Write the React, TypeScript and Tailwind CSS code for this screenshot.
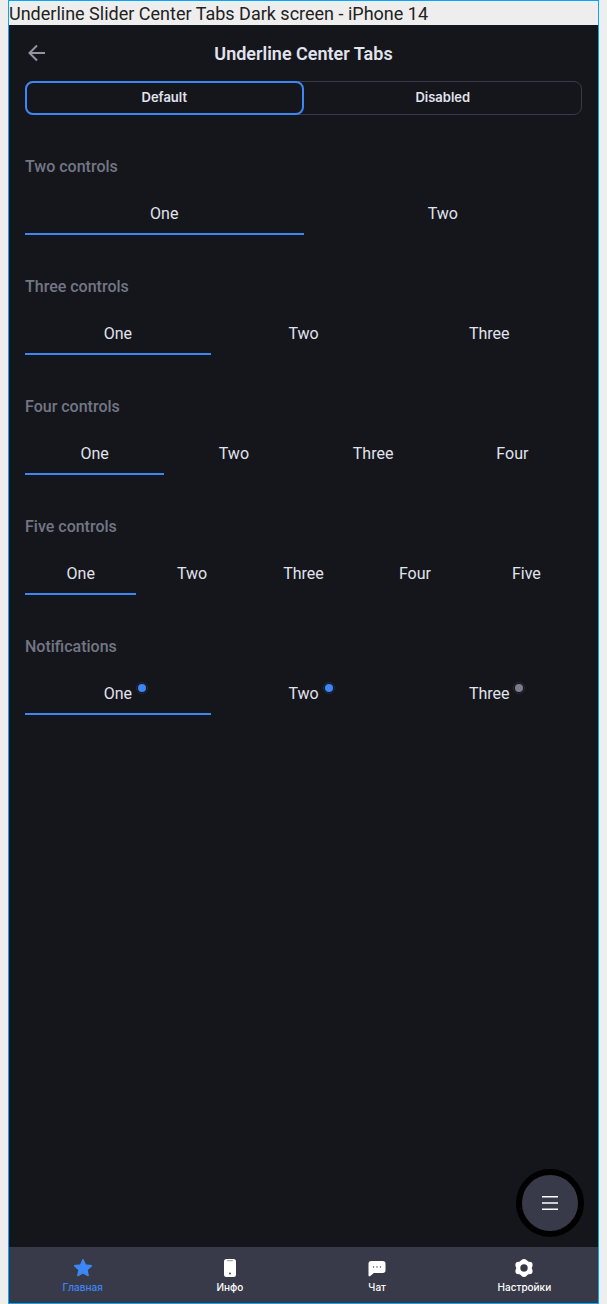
import { useState } from "react";
import type { ReactNode } from "react";

type Badge = "active" | "muted";
type Tab = { label: string; badge?: Badge };
type Section = { title: string; tabs: Tab[] };

const sections: Section[] = [
  { title: "Two controls", tabs: [{ label: "One" }, { label: "Two" }] },
  { title: "Three controls", tabs: [{ label: "One" }, { label: "Two" }, { label: "Three" }] },
  {
    title: "Four controls",
    tabs: [{ label: "One" }, { label: "Two" }, { label: "Three" }, { label: "Four" }],
  },
  {
    title: "Five controls",
    tabs: [{ label: "One" }, { label: "Two" }, { label: "Three" }, { label: "Four" }, { label: "Five" }],
  },
  {
    title: "Notifications",
    tabs: [
      { label: "One", badge: "active" },
      { label: "Two", badge: "active" },
      { label: "Three", badge: "muted" },
    ],
  },
];

function StarIcon() {
  return (
    <svg viewBox="0 0 20 20" className="size-5" fill="currentColor" aria-hidden="true">
      <path
        d="M10 1.500 12.500 6.900l6 .8-4.400 4.100 1.100 5.900L10 14.900l-5.200 2.800 1.100-5.900L1.500 7.700l6-.8Z"
        stroke="currentColor"
        strokeWidth="1.300"
        strokeLinejoin="round"
      />
    </svg>
  );
}

function PhoneIcon() {
  return (
    <svg viewBox="0 0 20 20" className="size-5" aria-hidden="true">
      <rect x="4" y="1" width="12" height="18" rx="2.500" fill="currentColor" />
      <path d="M7.500 2.600h5" stroke="#a5a6b0" strokeWidth="1.200" strokeLinecap="round" />
      <circle cx="10" cy="15.500" r="0.900" fill="#383a49" />
    </svg>
  );
}

function ChatIcon() {
  return (
    <svg viewBox="0 0 20 20" className="size-5" aria-hidden="true">
      <path
        d="M4.200 3h11.600A2.700 2.700 0 0 1 18.500 5.700v6.600a2.700 2.700 0 0 1-2.700 2.700H6.800l-3.500 3c-.7.5-1.800.3-1.800-.6V5.700A2.700 2.700 0 0 1 4.200 3Z"
        fill="currentColor"
      />
      <g fill="#383a49">
        <circle cx="6.500" cy="9" r="0.700" />
        <circle cx="10" cy="9" r="0.700" />
        <circle cx="13.500" cy="9" r="0.700" />
      </g>
    </svg>
  );
}

function GearIcon() {
  return (
    <svg viewBox="0 0 20 20" className="size-5" aria-hidden="true">
      <g fill="currentColor">
        <circle cx="10" cy="10" r="7.900" />
        <circle cx="10" cy="4" r="3" />
        <circle cx="15.400" cy="6.900" r="3.200" />
        <circle cx="15.400" cy="13.100" r="3.200" />
        <circle cx="10" cy="16" r="3" />
        <circle cx="4.600" cy="13.100" r="3.200" />
        <circle cx="4.600" cy="6.900" r="3.200" />
      </g>
      <circle cx="10" cy="10" r="3.700" fill="#383a49" />
    </svg>
  );
}

const navItems: { label: string; icon: ReactNode }[] = [
  { label: "Главная", icon: <StarIcon /> },
  { label: "Инфо", icon: <PhoneIcon /> },
  { label: "Чат", icon: <ChatIcon /> },
  { label: "Настройки", icon: <GearIcon /> },
];

function BadgeDot({ kind }: { kind: Badge }) {
  return (
    <span
      className={
        kind === "active"
          ? "absolute left-full top-0 ml-1 flex size-3 items-center justify-center rounded-full border border-[#1b2c4c] text-[#3d87f5]"
          : "absolute left-full top-0 ml-1 flex size-3 items-center justify-center rounded-full border border-[#292b32] text-[#7b7d8c]"
      }
    >
      <span className="size-2 shrink-0 rounded-full bg-current" />
    </span>
  );
}

function TabGroup({ title, tabs }: Section) {
  const [selected, setSelected] = useState(0);
  return (
    <section>
      <h2 className="text-base leading-6 font-medium text-[#737686]">{title}</h2>
      <div className="mt-4 flex" role="tablist" aria-label={title}>
        {tabs.map((tab, index) => (
          <button
            key={tab.label}
            type="button"
            role="tab"
            aria-selected={selected === index}
            onClick={() => setSelected(index)}
            className={
              selected === index
                ? "flex h-10 flex-1 items-center justify-center border-b-2 border-[#3d87f5]"
                : "flex h-10 flex-1 items-center justify-center border-b-2 border-transparent"
            }
          >
            <span className="relative text-base leading-6">
              {tab.label}
              {tab.badge && <BadgeDot kind={tab.badge} />}
            </span>
          </button>
        ))}
      </div>
    </section>
  );
}

export default function App() {
  const [mode, setMode] = useState("Default");
  return (
    <div className="flex min-h-screen bg-[#eeeeee] px-2 font-['Roboto',sans-serif]">
      <div className="flex flex-1 flex-col border border-[#00a8ff] bg-[#15161b] text-[#e1e3ed]">
        <p className="bg-[#eeeeee] pt-0.5 text-lg leading-[22px] text-[#222222]">
          Underline Slider Center Tabs Dark screen - iPhone 14
        </p>

        <header className="grid h-14 grid-cols-[24px_1fr_24px] items-center px-4">
          <button type="button" aria-label="Back" className="text-[#9294a1]">
            <svg viewBox="0 0 24 24" className="size-6" fill="none" stroke="currentColor" strokeWidth="2" aria-hidden="true">
              <path d="M20 12H5M12 4.500 4.500 12l7.500 7.500" />
            </svg>
          </button>
          <h1 className="pt-0.5 text-center text-lg leading-6 font-semibold">Underline Center Tabs</h1>
        </header>

        <main className="relative flex flex-1 flex-col px-4">
          <div className="flex rounded-lg border border-[#383a49] font-['Inter',sans-serif]">
            {["Default", "Disabled"].map((label) => (
              <button
                key={label}
                type="button"
                aria-pressed={mode === label}
                onClick={() => setMode(label)}
                className={
                  mode === label
                    ? "-my-px h-[34px] flex-1 rounded-lg border-2 border-[#3d87f5] pb-0.5 text-[13px] leading-5 font-semibold first:-ml-px last:-mr-px"
                    : "-my-px h-[34px] flex-1 rounded-lg border-2 border-transparent pb-0.5 text-[13px] leading-5 font-semibold first:-ml-px last:-mr-px"
                }
              >
                {label}
              </button>
            ))}
          </div>

          <div className="mt-10 flex flex-col gap-10">
            {sections.map((section) => (
              <TabGroup key={section.title} {...section} />
            ))}
          </div>

          <button
            type="button"
            aria-label="Menu"
            className="absolute right-3.5 bottom-2.5 flex size-17 items-center justify-center rounded-full border-6 border-black bg-[#383a49] text-white"
          >
            <svg viewBox="0 0 16 16" className="size-4" stroke="currentColor" strokeWidth="1.600" aria-hidden="true">
              <path d="M0 1.700h16M0 8h16M0 14.300h16" />
            </svg>
          </button>
        </main>

        <nav className="grid h-14 grid-cols-4 bg-[#383a49] font-['Inter',sans-serif]">
          {navItems.map(({ label, icon }, index) => (
            <a
              key={label}
              href="#"
              aria-current={index === 0 ? "page" : undefined}
              className={
                index === 0
                  ? "flex flex-col items-center gap-px pt-[11px] text-[#3d87f5]"
                  : "flex flex-col items-center gap-px pt-[11px] text-white"
              }
            >
              {icon}
              <span className="text-[10px] leading-4 font-medium">{label}</span>
            </a>
          ))}
        </nav>
      </div>
    </div>
  );
}
